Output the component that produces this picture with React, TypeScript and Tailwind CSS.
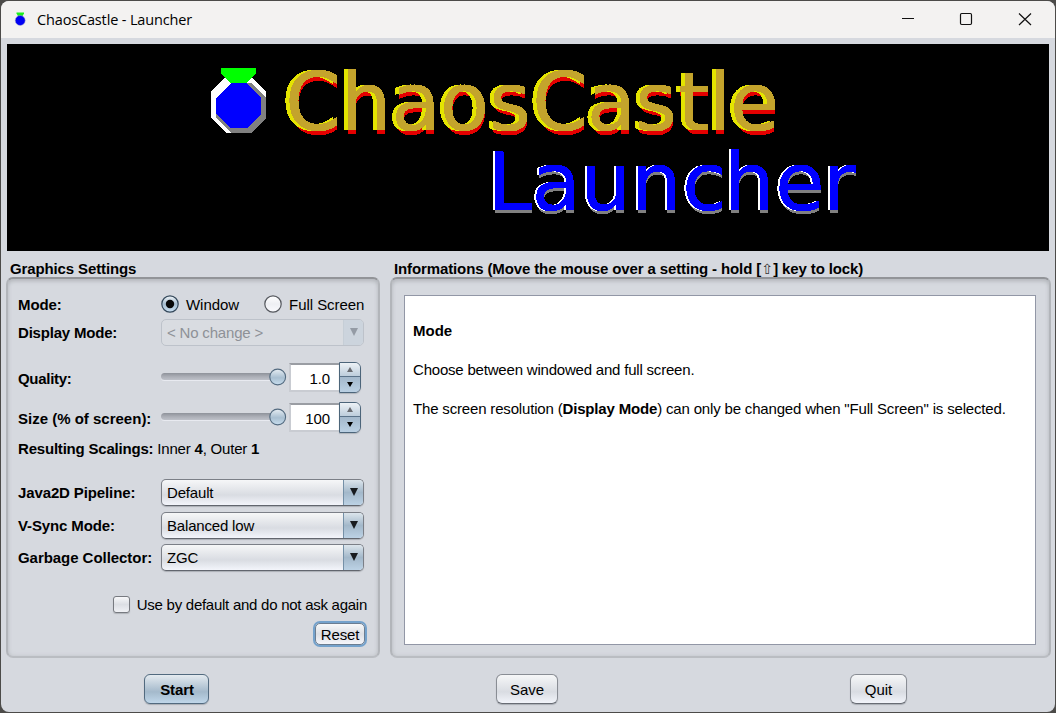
import type { ReactNode } from "react";

type WordProps = {
  children: string;
  id: string;
  xs: string;
  y: number;
  face: string;
  left: string;
  below: string;
  dx: number;
  dy: number;
};

function BevelWord({ children, id, xs, y, face, left, below, dx, dy }: WordProps) {
  return (
    <>
      <filter id={id} filterUnits="userSpaceOnUse" x="200" y="50" width="700" height="190" colorInterpolationFilters="sRGB">
        <feComponentTransfer in="SourceGraphic" result="crisp">
          <feFuncA type="discrete" tableValues="0 1" />
        </feComponentTransfer>
        <feFlood floodColor={below} result="belowColor" />
        <feOffset in="crisp" dy={dy} result="belowShape" />
        <feComposite in="belowColor" in2="belowShape" operator="in" result="belowLayer" />
        <feFlood floodColor={left} result="leftColor" />
        <feOffset in="crisp" dx={-dx} result="leftShape" />
        <feComposite in="leftColor" in2="leftShape" operator="in" result="leftLayer" />
        <feMerge>
          <feMergeNode in="belowLayer" />
          <feMergeNode in="leftLayer" />
          <feMergeNode in="crisp" />
        </feMerge>
      </filter>
      <text
        x={xs}
        y={y}
        fill={face}
        stroke={face}
        strokeWidth="0.6"
        fontFamily='"DejaVu Sans", sans-serif'
        fontSize="80"
        filter={`url(#${id})`}
      >
        {children}
      </text>
    </>
  );
}

function Banner() {
  return (
    <svg width="1042" height="207" viewBox="7 44 1042 207" className="ml-1.5 mt-1.5 block shrink-0 bg-black">
      <g shapeRendering="crispEdges">
        <path d="M227 76h23l16 15v27l-15 15h-25l-15-15V91z" fill="#fff" />
        <path d="M246 83h5l15 14v21l-15 15h-20l-15-15v-6z" fill="#808080" />
        <path d="M231 83h16l14 15v16l-14 14h-16l-15-14V98z" fill="#00f" />
        <path d="M221 68h35v5l-10 10h-16l-9-10z" fill="#0f0" />
      </g>
      <BevelWord id="goldBevel" xs="285.3 340.7 391.4 440 489.2 532.3 586.9 635.2 677.8 708.5 730" y={130} face="#c4a42c" left="#e4e400" below="#e40000" dx={4} dy={4}>
        ChaosCastle
      </BevelWord>
      <BevelWord id="blueBevel" xs="487.5 531.7 580.6 631.1 682.2 724.1 775.2 823.1" y={210} face="#0000ff" left="#ffffff" below="#808080" dx={2} dy={3}>
        Launcher
      </BevelWord>
    </svg>
  );
}

function TitleBar() {
  return (
    <header className="flex h-[37px] shrink-0 items-center bg-[#f3f2f1] pl-[13px] text-black">
      <svg width="12" height="16" viewBox="0 0 12 16" className="mr-[11px]">
        <path d="M2.500 .5h7.500v1L8 5H4.500L2.500 1.500z" fill="#1df01d" />
        <circle cx="6.200" cy="8.500" r="5" fill="#0000f4" stroke="#b0b0c8" strokeWidth=".5" />
      </svg>
      <span className="grow font-['Open_Sans',sans-serif] text-[14.5px] tracking-[-0.15px]">
        ChaosCastle - Launcher
      </span>
      <svg width="132" height="14" viewBox="0 0 132 14" fill="none" stroke="#111" className="mb-px mr-[22px]">
        <path d="M1 6.500h12" />
        <rect x="59.500" y="1.500" width="11" height="11" rx="1.200" strokeWidth="1.200" />
        <path d="M118 1.500l12 11.500M130 1.500L118 13" strokeWidth="1.200" />
      </svg>
    </header>
  );
}

function Panel({ title, width, children }: { title: ReactNode; width: string; children: ReactNode }) {
  return (
    <section className={`flex h-[407px] shrink-0 flex-col ${width}`}>
      <h2 className="h-[26px] whitespace-nowrap pl-[4px] pt-[9px] text-[15px] font-bold leading-[18px] tracking-[-0.12px]">{title}</h2>
      <div className="flex grow flex-col rounded-[7px] border-x-2 border-b-2 border-t-2 border-x-[#b2b5ba] border-b-[#babdc2] border-t-[#929498] shadow-[inset_0_3px_4px_-1px_#b4b7bc,inset_0_0_4px_#c2c5ca]">
        {children}
      </div>
    </section>
  );
}

function Row({ label, className, children }: { label: string; className: string; children: ReactNode }) {
  return (
    <div className={`flex items-center ${className}`}>
      <span className="w-[143px] shrink-0 whitespace-nowrap pt-[2px] font-bold">{label}</span>
      {children}
    </div>
  );
}

function Radio({ label, checked }: { label: string; checked?: boolean }) {
  return (
    <label className="flex items-center gap-[7px]">
      <svg width="18" height="18" viewBox="0 0 18 18" className="mb-px">
        <defs>
          <linearGradient id="radioOn" x2="0" y2="1">
            <stop stopColor="#f2f6f9" />
            <stop offset=".5" stopColor="#a6bdd0" />
            <stop offset="1" stopColor="#cae0f2" />
          </linearGradient>
          <linearGradient id="radioOff" x2="0" y2="1">
            <stop stopColor="#fff" />
            <stop offset=".5" stopColor="#eeeff3" />
            <stop offset="1" stopColor="#fafafe" />
          </linearGradient>
        </defs>
        <circle cx="9" cy="9" r="8.200" fill={checked ? "url(#radioOn)" : "url(#radioOff)"} stroke={checked ? "#34485a" : "#55585e"} strokeWidth="1.200" />
        {checked && <circle cx="9" cy="9" r="4.200" fill="#080808" />}
      </svg>
      <span className="tracking-[-0.05px]">{label}</span>
    </label>
  );
}

function Combo({ value, disabled }: { value: string; disabled?: boolean }) {
  return (
    <div
      className={`flex h-[27px] w-[203px] shrink-0 overflow-hidden rounded-[5px] border ${
        disabled
          ? "border-[#bdc2ca] bg-[#d9dce1] text-[#8e9197]"
          : "border-[#7b7f87] border-b-[#62666e] bg-linear-to-b from-[#f6f7f8] via-[#d9dce2] via-60% to-[#f3f5fb] shadow-[0_1px_1px_#abafb5]"
      }`}
    >
      <span className="grow pl-[5px] leading-[26px] tracking-[-0.18px]">{value}</span>
      <span
        className={`flex w-5 justify-center border-l pt-[8px] ${
          disabled
            ? "border-[#c6ced6] bg-[#ccd4dd]"
            : "border-[#7590a7] bg-linear-to-b from-[#dce5ec] via-[#a3b8ca] via-50% to-[#bcd2e5]"
        }`}
      >
        <svg width="8" height="8" viewBox="0 0 8 8">
          <path d="M0 0h8L4 8z" fill={disabled ? "#949ba5" : "#181b1f"} />
        </svg>
      </span>
    </div>
  );
}

function SliderSpinner({ value }: { value: string }) {
  return (
    <>
      <svg width="126" height="18" viewBox="0 0 126 18" className="mb-[2px] shrink-0">
        <defs>
          <linearGradient id="track" x2="0" y2="1">
            <stop stopColor="#8e929a" />
            <stop offset=".5" stopColor="#aaadb5" />
            <stop offset="1" stopColor="#bec1c9" />
          </linearGradient>
          <linearGradient id="thumb" x2="0" y2="1">
            <stop stopColor="#e6edf3" />
            <stop offset=".55" stopColor="#a9bfd1" />
            <stop offset="1" stopColor="#c9dff0" />
          </linearGradient>
        </defs>
        <rect y="6" width="124" height="7" rx="3.500" fill="#e8eaf0" />
        <rect y="5" width="124" height="7" rx="3.500" fill="url(#track)" />
        <circle cx="116.700" cy="9" r="7.900" fill="url(#thumb)" stroke="#536a7f" strokeWidth="1.100" />
      </svg>
      <div className="ml-[2px] flex h-[31px] w-[72px] shrink-0">
        <div className="my-px grow border-2 border-r-0 border-[#c9ccd2] border-t-[#9a9da3] bg-white pr-[9px] text-right leading-[27px] tracking-[-0.1px]">
          {value}
        </div>
        <div className="flex w-[22px] flex-col overflow-hidden rounded-r-[6px] border border-[#4c657a] shadow-[0_1px_1px_#b0b4bb]">
          <span className="flex h-[14px] items-center justify-center border-b border-[#5b7389] bg-linear-to-b from-[#edf2f6] to-[#bdcddb]">
            <svg width="6" height="5" viewBox="0 0 6 5"><path d="M3 0l3 5H0z" fill="#686b70" /></svg>
          </span>
          <span className="flex grow items-center justify-center bg-linear-to-b from-[#a3b8cb] to-[#bad0e3]">
            <svg width="6" height="5" viewBox="0 0 6 5"><path d="M0 0h6L3 5z" fill="#000" /></svg>
          </span>
        </div>
      </div>
    </>
  );
}

function Button({ children, primary, className }: { children: string; primary?: boolean; className: string }) {
  return (
    <button
      className={`h-[30px] shrink-0 rounded-[6px] border pt-px shadow-[0_1px_1px_#a9adb4] ${
        primary
          ? "border-[#526a7f] bg-linear-to-b from-[#e5ebf0] via-[#a4b9cb] via-60% to-[#c0d7ea] pl-px font-bold tracking-[-0.1px]"
          : "border-[#898d94] border-b-[#686c74] bg-linear-to-b from-[#f6f7f8] via-[#d9dce2] via-60% to-[#f2f4fa]"
      } ${className}`}
    >
      {children}
    </button>
  );
}

export default function App() {
  return (
    <div className="h-[713px] w-[1056px] overflow-hidden bg-[#4c4b49] p-px">
      <main className="flex h-[711px] w-[1054px] flex-col overflow-hidden rounded-[8px] bg-[#d6d9df] font-['Liberation_Sans',Arial,sans-serif] text-[15px] leading-[18px] text-black">
        <TitleBar />
        <Banner />
        <div className="ml-[5px] flex gap-[10px]">
          <Panel title="Graphics Settings" width="w-[374px]">
            <div className="flex flex-col pl-[10px] tracking-[-0.12px]">
              <Row label="Mode:" className="mt-[14px] h-[22px]">
                <div className="flex pt-px">
                  <Radio label="Window" checked />
                  <span className="w-[25px]" />
                  <Radio label="Full Screen" />
                </div>
              </Row>
              <Row label="Display Mode:" className="mt-[3px] h-[28px] tracking-[-0.2px]">
                <Combo value="< No change >" disabled />
              </Row>
              <Row label="Quality:" className="mt-[16px] h-[31px] tracking-[-0.3px]">
                <SliderSpinner value="1.0" />
              </Row>
              <Row label="Size (% of screen):" className="mt-[9px] h-[31px] tracking-[0px]">
                <SliderSpinner value="100" />
              </Row>
              <p className="mt-[7px] h-[18px] tracking-[-0.2px]">
                <b>Resulting Scalings:</b> Inner <b>4</b>, Outer <b>1</b>
              </p>
              <Row label="Java2D Pipeline:" className="mt-[20px] h-[28px]">
                <Combo value="Default" />
              </Row>
              <Row label="V-Sync Mode:" className="mt-[5px] h-[28px]">
                <Combo value="Balanced low" />
              </Row>
              <Row label="Garbage Collector:" className="mt-[4px] h-[28px] tracking-[-0.05px]">
                <Combo value="ZGC" />
              </Row>
              <label className="mt-[24px] flex h-[18px] items-center self-end whitespace-nowrap pr-[11px] tracking-[-0.26px]">
                <span className="mr-[7px] size-[17px] rounded-[3px] border border-[#777a80] bg-linear-to-b from-[#f8f8fa] via-[#dcdfe4] to-[#f0f1f5] shadow-[0_1px_1px_#b0b3b8]" />
                <span className="pt-[2px]">Use by default and do not ask again</span>
              </label>
              <button className="mr-[13px] mt-[10px] h-[22px] w-[50px] self-end rounded-[5px] border border-[#6b7d91] bg-linear-to-b from-[#f8f9fa] via-[#dcdfe4] to-[#f5f6fb] pt-px leading-[20px] shadow-[0_0_0_2px_#74a2cc]">
                Reset
              </button>
            </div>
          </Panel>
          <Panel
            width="w-[661px]"
            title={<>Informations (Move the mouse over a setting - hold [<span className="inline-block w-3 text-center font-['DejaVu_Sans',sans-serif] text-[14px] font-normal leading-none text-[#333]">⇧</span>] key to lock)</>}
          >
            <div className="ml-[12px] mt-[16px] h-[350px] w-[632px] border border-[#9297a6] bg-white px-2 pt-[26px] leading-[18px]">
              <h3 className="font-bold">Mode</h3>
              <p className="mt-[21px] tracking-[-0.2px]">Choose between windowed and full screen.</p>
              <p className="mt-[21px] whitespace-nowrap tracking-[-0.17px]">
                The screen resolution (<b>Display Mode</b>) can only be changed when "Full Screen" is selected.
              </p>
            </div>
          </Panel>
        </div>
        <footer className="flex pl-[143px] pt-[16px]">
          <Button primary className="w-[65px]">Start</Button>
          <Button className="ml-[287px] w-[62px]">Save</Button>
          <Button className="ml-[292px] w-[57px]">Quit</Button>
        </footer>
      </main>
    </div>
  );
}
